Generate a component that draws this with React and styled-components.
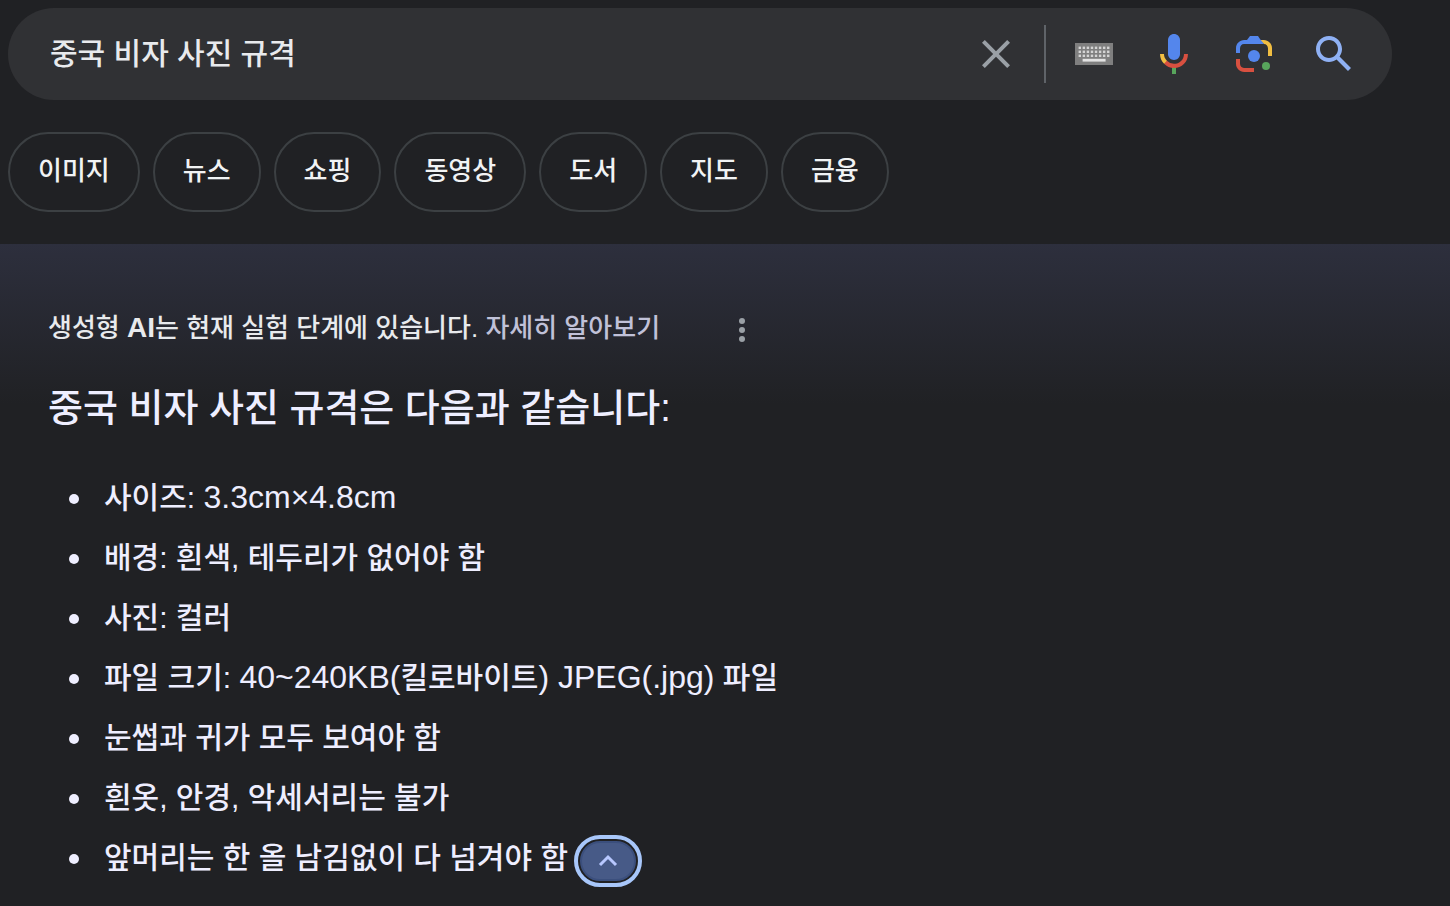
import { useState } from "react";
import styled, { createGlobalStyle } from "styled-components";

const filters = ["이미지", "뉴스", "쇼핑", "동영상", "도서", "지도", "금융"];

const specs = [
  <>
    사이즈: <Latin>3.3cm×4.8cm</Latin>
  </>,
  "배경: 흰색, 테두리가 없어야 함",
  "사진: 컬러",
  <>
    파일 크기: <Latin>40~240KB(</Latin>킬로바이트
    <Latin>) JPEG(.jpg)</Latin> 파일
  </>,
  "눈썹과 귀가 모두 보여야 함",
  "흰옷, 안경, 악세서리는 불가",
  "앞머리는 한 올 남김없이 다 넘겨야 함",
];

export default function App() {
  const [query, setQuery] = useState("중국 비자 사진 규격");

  return (
    <>
      <GlobalStyle />
      <Header>
        <SearchBar role="search" onSubmit={(e) => e.preventDefault()}>
          <SearchInput
            type="text"
            aria-label="검색"
            value={query}
            onChange={(e) => setQuery(e.target.value)}
          />
          <IconButton
            type="button"
            aria-label="지우기"
            onClick={() => setQuery("")}
          >
            <CloseIcon />
          </IconButton>
          <Divider />
          <Tools>
            <IconButton type="button" aria-label="입력 도구">
              <KeyboardIcon />
            </IconButton>
            <IconButton type="button" aria-label="음성 검색">
              <MicIcon />
            </IconButton>
            <IconButton type="button" aria-label="이미지로 검색">
              <LensIcon />
            </IconButton>
            <IconButton type="submit" aria-label="검색">
              <SearchIcon />
            </IconButton>
          </Tools>
        </SearchBar>
        <Filters>
          {filters.map((filter) => (
            <Chip key={filter} href="#">
              {filter}
            </Chip>
          ))}
        </Filters>
      </Header>
      <Answer>
        <Notice>
          <p>
            생성형 <b>AI</b>는 현재 실험 단계에 있습니다.{" "}
            <a href="#">자세히 알아보기</a>
          </p>
          <MenuButton type="button" aria-label="더보기">
            <DotsIcon />
          </MenuButton>
        </Notice>
        <Title>중국 비자 사진 규격은 다음과 같습니다:</Title>
        <SpecList>
          {specs.map((spec, i) => (
            <Spec key={i}>
              <span>{spec}</span>
              {i === specs.length - 1 && (
                <CollapseButton type="button" aria-label="접기">
                  <ChevronIcon />
                </CollapseButton>
              )}
            </Spec>
          ))}
        </SpecList>
      </Answer>
    </>
  );
}

function Latin({ children }) {
  return <LatinText>{children}</LatinText>;
}

function CloseIcon() {
  return (
    <svg width="48" height="48" viewBox="0 0 24 24" fill="#9aa0a6">
      <path d="M19 6.41L17.59 5 12 10.59 6.41 5 5 6.41 10.59 12 5 17.59 6.41 19 12 13.41 17.59 19 19 17.59 13.41 12z" />
    </svg>
  );
}

function KeyboardIcon() {
  const columns = [0, 1, 2, 3, 4, 5, 6, 7];
  return (
    <svg width="38" height="22" viewBox="0 0 38 22">
      <rect width="38" height="22" fill="#7f7f7f" />
      {[3.6, 7.6, 11.6].map((y) =>
        columns.map((x) => (
          <rect
            key={`${x}-${y}`}
            x={3.6 + x * 4.06}
            y={y}
            width="2.4"
            height="2.4"
            fill="#d4d4d4"
          />
        ))
      )}
      <rect x="7.6" y="15.8" width="23" height="2.8" fill="#e2e2e2" />
    </svg>
  );
}

function MicIcon() {
  return (
    <svg width="48" height="48" viewBox="0 0 24 24">
      <path
        fill="#5486ec"
        d="M12 15c1.66 0 3-1.31 3-2.97V5.01C15 3.35 13.66 2 12 2S9 3.34 9 5.01v7.02C9 13.69 10.34 15 12 15z"
      />
      <path fill="#58a55c" d="M11 18.08h2V22h-2z" />
      <path
        fill="#f1be42"
        d="M7.05 16.87C5.78 15.54 5 14.04 5 12h2c0 1.45.56 2.42 1.47 3.38v.32l-1.15 1.18z"
      />
      <path
        fill="#d85040"
        d="M12 16.93a4.97 5.25 0 0 1-3.54-1.55l-1.41 1.49C8.31 18.21 10.07 19 12 19c3.87 0 6.99-2.92 6.99-7H17c0 2.92-2.24 4.93-5 4.93z"
      />
    </svg>
  );
}

function LensIcon() {
  return (
    <svg width="48" height="48" viewBox="0 0 192 192">
      <circle cx="144" cy="144" r="16" fill="#58a55c" />
      <circle cx="96" cy="104" r="24" fill="#5486ec" />
      <path
        fill="#d85040"
        d="M24 135.2C24 153.31 38.69 168 56.8 168H96v-16l-40.1-.1C47.1 151.9 40 143.71 40 134v-18H24z"
      />
      <path
        fill="#f1be42"
        d="M168 72.8C168 54.69 153.31 40 135.2 40H116l20 16c8.8 0 16 8.29 16 18v30h16z"
      />
      <path
        fill="#5486ec"
        d="M112 24H80L68 40H56.8C38.69 40 24 54.69 24 72.8V92h16V74c0-9.71 7.2-18 16-18h80l-16-20z"
      />
    </svg>
  );
}

function SearchIcon() {
  return (
    <svg width="48" height="48" viewBox="0 0 24 24" fill="#8fb1f4">
      <path d="M20.49 19l-5.73-5.73C15.53 12.2 16 10.91 16 9.5 16 5.91 13.09 3 9.5 3S3 5.91 3 9.5 5.91 16 9.5 16c1.41 0 2.7-.47 3.77-1.24L19 20.49 20.49 19zM5 9.5C5 7.01 7.01 5 9.5 5S14 7.01 14 9.5 11.99 14 9.5 14 5 11.99 5 9.5z" />
    </svg>
  );
}

function DotsIcon() {
  return (
    <svg width="36" height="36" viewBox="0 0 36 36" fill="#9aa0a6">
      <circle cx="18" cy="9" r="3" />
      <circle cx="18" cy="18" r="3" />
      <circle cx="18" cy="27" r="3" />
    </svg>
  );
}

function ChevronIcon() {
  return (
    <svg width="20" height="14" viewBox="0 0 20 14" fill="none">
      <path d="M2 11l8-8 8 8" stroke="#b8c8ff" strokeWidth="3" />
    </svg>
  );
}

const GlobalStyle = createGlobalStyle`
  * {
    box-sizing: border-box;
  }
  body {
    margin: 0;
    background: #202124;
    color: #e8eaed;
    font-family: "Liberation Sans", "Noto Sans CJK KR", sans-serif;
    font-weight: 500;
  }
  a {
    text-decoration: none;
  }
  button {
    padding: 0;
    border: none;
    background: none;
    cursor: pointer;
  }
  svg {
    display: block;
  }
`;

const Header = styled.header`
  padding: 8px 58px 32px 8px;
`;

const SearchBar = styled.form`
  display: flex;
  align-items: center;
  height: 92px;
  padding: 0 34px 0 42px;
  border-radius: 46px;
  background: #303134;
`;

const SearchInput = styled.input`
  flex: 1;
  min-width: 0;
  height: 56px;
  padding: 0 0 6px;
  border: none;
  outline: none;
  background: transparent;
  color: #e8eaed;
  font-family: inherit;
  font-size: 30px;
  font-weight: inherit;
`;

const IconButton = styled.button`
  display: flex;
  align-items: center;
  justify-content: center;
  width: 48px;
  height: 48px;
`;

const Divider = styled.span`
  width: 2px;
  height: 58px;
  margin: 0 24px;
  background: #5f6368;
`;

const Tools = styled.div`
  display: flex;
  gap: 32px;
`;

const Filters = styled.nav`
  display: flex;
  flex-wrap: wrap;
  gap: 13px;
  margin-top: 32px;
`;

const Chip = styled.a`
  height: 80px;
  padding: 0 28px;
  border: 2px solid #3c4043;
  border-radius: 40px;
  color: #f1f3f4;
  font-size: 26px;
  line-height: 74px;
`;

const Answer = styled.main`
  padding: 64px 48px 16px;
  background: linear-gradient(#2d2f3d, #202124 160px);
`;

const Notice = styled.div`
  display: flex;
  align-items: center;
  gap: 64px;
  p {
    margin: 0;
    font-size: 26px;
    line-height: 40px;
  }
  b {
    font-size: 28px;
  }
  a {
    color: #c0c1d8;
  }
`;

const MenuButton = styled.button`
  width: 36px;
  height: 36px;
  margin-top: 4px;
`;

const Title = styled.h1`
  margin: 32px 0;
  color: #eeeeff;
  font-size: 38px;
  font-weight: 500;
  line-height: 56px;
`;

const SpecList = styled.ul`
  margin: 0;
  padding: 0;
  list-style: none;
`;

const Spec = styled.li`
  display: flex;
  align-items: center;
  min-height: 60px;
  padding-left: 21px;
  color: #eeeeff;
  font-size: 30px;
  line-height: 60px;
  &::before {
    content: "";
    width: 10px;
    height: 10px;
    margin: 2px 25px 0 0;
    border-radius: 50%;
    background: #eeeeff;
  }
`;

const LatinText = styled.span`
  font-size: 32px;
  line-height: 1;
`;

const CollapseButton = styled.button`
  display: flex;
  align-items: center;
  justify-content: center;
  width: 56px;
  height: 40px;
  margin: 6px 0 0 12px;
  border: 2px solid #3b4f7d;
  border-radius: 20px;
  outline: 4px solid #a8c7fa;
  outline-offset: 2px;
  background: #475a87;
`;
